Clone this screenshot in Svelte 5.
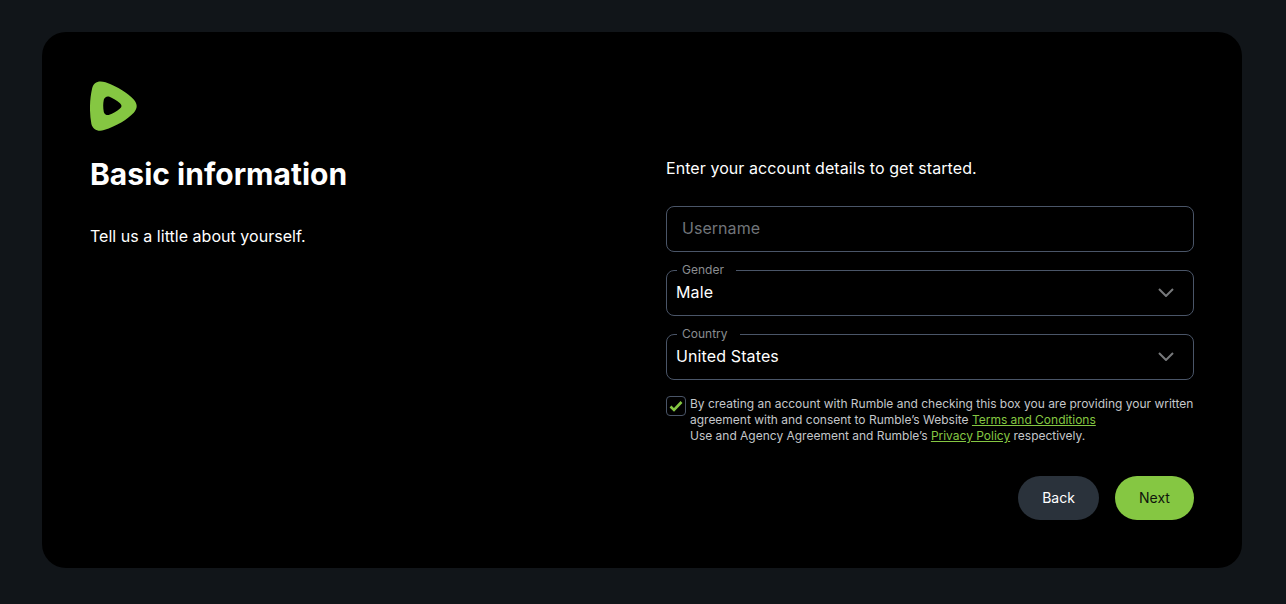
<script>
  let username = $state("");
  let gender = $state("Male");
  let country = $state("United States");
  let agreed = $state(true);

  const genders = ["Male", "Female", "Unspecified"];
  const countries = ["United States", "Canada", "United Kingdom"];
</script>

{#snippet chevron()}
  <svg class="chevron" width="16" height="9" viewBox="0 0 16 9" fill="none">
    <path d="M1 1l7 7 7-7" stroke="#77797b" stroke-width="2" />
  </svg>
{/snippet}

<div class="page">
  <main class="card">
    <section class="intro">
      <svg class="logo" width="47" height="50" viewBox="0 0 47 51" preserveAspectRatio="none">
        <path
          fill="#85c742"
          fill-rule="evenodd"
          d="M43.5 18.6C38 12.6 28 5.8 15.5 1.3 8.6-1.1 3.4 1.3 2.1 7.6-.5 19-.7 32.500 1.400 43.800 2.700 49.500 8.200 52 14 50 27 45.700 37 39.300 43.800 32.300 47.800 27.800 47.600 23 43.500 18.600ZM30 28C27 30.500 22.600 33.500 19.300 34.500 16.900 35.300 14.300 34 13.800 31.500 13 27.400 13 23 13.800 19 14.400 16.500 17 15 19.500 16 22.600 17.300 27 19.800 30 22.600 32 24.500 32 26.300 30 28Z"
        />
      </svg>
      <h1>Basic information</h1>
      <p>Tell us a little about yourself.</p>
    </section>

    <form class="details">
      <p class="lead">Enter your account details to get started.</p>

      <div class="fields">
        <input class="control username" type="text" placeholder="Username" bind:value={username} />

        <div class="field">
          <span class="legend">Gender</span>
          <select class="control" bind:value={gender}>
            {#each genders as g}
              <option>{g}</option>
            {/each}
          </select>
          {@render chevron()}
        </div>

        <div class="field">
          <span class="legend">Country</span>
          <select class="control" bind:value={country}>
            {#each countries as c}
              <option>{c}</option>
            {/each}
          </select>
          {@render chevron()}
        </div>
      </div>

      <label class="terms">
        <input type="checkbox" bind:checked={agreed} />
        <span class="box">
          {#if agreed}
            <svg width="14" height="12" viewBox="0 0 14 12" fill="none">
              <path d="M1.500 6.500l3.500 3.500 7.500-8" stroke="#85c742" stroke-width="2.600" />
            </svg>
          {/if}
        </span>
        <span class="terms-text">
          By creating an account with Rumble and checking this box you are providing your written
          agreement with and consent to Rumble’s Website <a href="#terms">Terms and Conditions</a><br />
          Use and Agency Agreement and Rumble’s <a href="#privacy">Privacy Policy</a> respectively.
        </span>
      </label>

      <div class="actions">
        <button type="button" class="btn back">Back</button>
        <button type="button" class="btn next">Next</button>
      </div>
    </form>
  </main>
</div>

<style>
  :global(body) {
    background: #111519;
    font-family: Inter, "Liberation Sans", sans-serif;
  }

  .page {
    height: 604px;
    box-sizing: border-box;
    padding: 32px 44px 36px 42px;
  }

  .card {
    height: 100%;
    box-sizing: border-box;
    background: #000;
    border-radius: 24px;
    padding: 48px;
    display: grid;
    grid-template-columns: 528px 528px;
    gap: 48px;
    color: #fff;
  }

  .logo {
    display: block;
    margin-top: 1px;
  }

  h1 {
    margin: 24px 0 0;
    font-size: 30px;
    line-height: 38px;
    font-weight: 700;
    letter-spacing: 0.02px;
  }

  .intro p {
    margin: 31px 0 0;
    font-size: 16px;
    line-height: 24px;
    letter-spacing: 0.03px;
  }

  .details {
    padding-top: 76px;
  }

  .lead {
    margin: 0;
    font-size: 16px;
    line-height: 24px;
    letter-spacing: 0.07px;
  }

  .fields {
    margin-top: 26px;
    display: flex;
    flex-direction: column;
    gap: 18px;
  }

  .field {
    position: relative;
  }

  .control {
    display: block;
    width: 100%;
    height: 46px;
    box-sizing: border-box;
    background: #000;
    border: 1px solid #4a5568;
    border-radius: 8px;
    color: #fff;
    font: inherit;
    font-size: 16px;
    letter-spacing: 0.12px;
    outline: none;
    appearance: none;
    padding: 0 9px 2px;
  }

  .username {
    padding: 0 15px 2px;
    letter-spacing: 0.04px;
  }

  .username::placeholder {
    color: #70757a;
    opacity: 1;
  }

  .legend {
    position: absolute;
    left: 11px;
    top: -8px;
    background: #000;
    padding: 0 12px 0 5px;
    font-size: 12px;
    line-height: 16px;
    color: #8a8d90;
  }

  .chevron {
    position: absolute;
    right: 20px;
    top: 18px;
    pointer-events: none;
  }

  .terms {
    margin-top: 16px;
    display: flex;
    gap: 4px;
    position: relative;
  }

  .terms input {
    position: absolute;
    opacity: 0;
    width: 20px;
    height: 20px;
    margin: 0;
  }

  .box {
    flex: none;
    width: 20px;
    height: 20px;
    box-sizing: border-box;
    border: 1px solid #4a5568;
    border-radius: 4px;
    display: flex;
    align-items: center;
    justify-content: center;
  }

  .terms-text {
    font-size: 12px;
    line-height: 16px;
    letter-spacing: -0.01px;
    color: #c4c7ca;
  }

  .terms-text a {
    color: #85c742;
  }

  .actions {
    margin-top: 32px;
    display: flex;
    justify-content: flex-end;
    gap: 16px;
  }

  .btn {
    height: 44px;
    border: 0;
    border-radius: 22px;
    padding: 0 24px 2px;
    font: inherit;
    font-size: 14px;
    cursor: pointer;
    min-width: 79px;
  }

  .back {
    background: #2a323b;
    color: #fff;
    width: 81px;
  }

  .next {
    background: #85c742;
    color: #10140c;
  }
</style>
